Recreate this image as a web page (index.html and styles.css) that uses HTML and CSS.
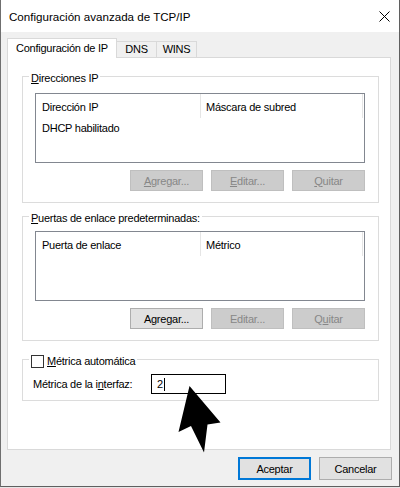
FILE: index.html
```html
<!DOCTYPE html>
<html lang="es">
<head>
<meta charset="utf-8">
<title>Configuración avanzada de TCP/IP</title>
<link rel="stylesheet" href="styles.css">
</head>
<body>
<div class="window">
  <div class="titlebar">
    <span class="title">Configuración avanzada de TCP/IP</span>
    <svg class="close" width="11" height="11" viewBox="0 0 11 11"><path d="M0.5 0.5 L10.5 10.5 M10.5 0.5 L0.5 10.5" stroke="#000" stroke-width="1" fill="none"/></svg>
  </div>
  <div class="client">
    <div class="tabs">
      <div class="tab active">Configuración de IP</div>
      <div class="tab">DNS</div>
      <div class="tab">WINS</div>
    </div>
    <div class="panel">
      <fieldset class="group g1">
        <legend><u>D</u>irecciones IP</legend>
        <div class="listview">
          <div class="lv-head">
            <div class="col c1">Dirección IP</div>
            <div class="col c2">Máscara de subred</div>
            <div class="col c3"></div>
          </div>
          <div class="lv-row">DHCP habilitado</div>
        </div>
        <div class="btnrow">
          <button class="btn" disabled><u>A</u>gregar...</button>
          <button class="btn" disabled><u>E</u>ditar...</button>
          <button class="btn" disabled><u>Q</u>uitar</button>
        </div>
      </fieldset>
      <fieldset class="group g2">
        <legend><u>P</u>uertas de enlace predeterminadas:</legend>
        <div class="listview">
          <div class="lv-head">
            <div class="col c1">Puerta de enlace</div>
            <div class="col c2">Métrico</div>
            <div class="col c3"></div>
          </div>
        </div>
        <div class="btnrow">
          <button class="btn">A<u>g</u>regar...</button>
          <button class="btn" disabled>Editar...</button>
          <button class="btn" disabled>Q<u>u</u>itar</button>
        </div>
      </fieldset>
      <fieldset class="group g3">
        <legend><span class="check"></span><span class="check-label"><u>M</u>étrica automática</span></legend>
        <div class="metric-row">
          <span class="metric-label">Métrica de la i<u>n</u>terfaz:</span>
          <span class="input">2<span class="caret"></span></span>
        </div>
      </fieldset>
    </div>
    <div class="footer">
      <button class="btn big default">Aceptar</button>
      <button class="btn big">Cancelar</button>
    </div>
  </div>
  <svg class="cursor" width="400" height="487" viewBox="0 0 400 487"><polygon points="189.5,386 220.5,422.5 207.5,424.5 204,452.5 191,426 178.5,432" fill="#000"/></svg>
</div>
</body>
</html>
```
FILE: styles.css
```css
* { box-sizing: border-box; }
html, body { margin: 0; padding: 0; }
body {
  width: 400px;
  height: 488px;
  background: #e6e6e6;
  font-family: "Liberation Sans", Arial, sans-serif;
  font-size: 11px;
  letter-spacing: -0.25px;
  color: #000;
}
u { text-decoration: underline; text-underline-offset: 1px; }

.window {
  position: relative;
  width: 400px;
  height: 487px;
  background: #f0f0f0;
  border-left: 1px solid #6f6f6f;
  border-right: 1px solid #5f5f5f;
  border-bottom: 1px solid #5f5f5f;
  display: flex;
  flex-direction: column;
}

.titlebar {
  height: 32px;
  background: #fff;
  display: flex;
  align-items: center;
  justify-content: space-between;
  padding: 0 9px 0 8px;
  flex: none;
}
.title {
  font-size: 11.6px;
  letter-spacing: 0;
  padding-top: 1px;
}
.close { display: block; }

.client {
  flex: 1;
  padding: 6px 8px 0 6px;
  display: flex;
  flex-direction: column;
}

.tabs {
  display: flex;
  align-items: flex-end;
  height: 19px;
}
.tab {
  width: 40px;
  height: 16px;
  line-height: 15px;
  text-align: center;
  border: 1px solid #d9d9d9;
  border-left: none;
  border-bottom: none;
  background: #f0f0f0;
}
.tab.active {
  width: 110px;
  height: 20px;
  margin-bottom: -1px;
  padding-top: 2px;
  border-left: 1px solid #d9d9d9;
  background: #fff;
  position: relative;
  z-index: 1;
}

.panel {
  height: 393px;
  background: #fff;
  border: 1px solid #d9d9d9;
  padding: 0 11px 0 14px;
  display: flex;
  flex-direction: column;
}

.group {
  margin: 0;
  border: 1px solid #dcdcdc;
  min-width: 0;
}
.group legend {
  padding: 5px 2px 0 2px;
  line-height: 13px;
  margin-left: -6px;
}
.g1 { margin-top: 9px; padding: 8px 13px 11px 12px; }
.g2 { margin-top: 4px; padding: 6px 13px 11px 12px; }
.g3 { margin-top: 9px; padding: 6px 10px 6px 10px; }
.g3 legend { margin-left: -4px; }

.listview {
  height: 70px;
  border: 1px solid #828790;
  background: #fff;
}
.lv-head {
  display: flex;
  height: 24px;
}
.lv-head .col {
  height: 24px;
  padding: 2px 0 0 6px;
  line-height: 22px;
  white-space: nowrap;
}
.lv-head .c1 { width: 165px; border-right: 1px solid #e5e5e5; }
.lv-head .c2 { width: 162px; padding-left: 5px; border-right: 1px solid #e5e5e5; }
.lv-head .c3 { flex: 1; padding: 0; }
.lv-row {
  padding: 1px 0 0 6px;
  line-height: 18px;
}

.btnrow {
  display: flex;
  justify-content: flex-end;
  gap: 8px;
  margin-top: 7px;
}
.btn {
  width: 73px;
  height: 21px;
  padding: 0;
  margin: 0;
  font: inherit;
  letter-spacing: inherit;
  color: #000;
  background: #e1e1e1;
  border: 1px solid #adadad;
  border-radius: 0;
}
.btn:disabled {
  background: #cccccc;
  border-color: #bfbfbf;
  color: #878787;
}
.btn.big { height: 23px; }
.btn.default { border: 2px solid #0078d7; }

.check {
  display: inline-block;
  width: 13px;
  height: 13px;
  border: 1px solid #333;
  background: #fff;
  vertical-align: -3px;
  margin-right: 3px;
}

.metric-row {
  display: flex;
  align-items: center;
}
.metric-label {
  width: 118px;
  flex: none;
}
.input {
  width: 75px;
  height: 20px;
  border: 1px solid #000;
  background: #fff;
  padding-left: 5px;
  line-height: 18px;
  display: flex;
  align-items: center;
}
.caret {
  display: inline-block;
  width: 1px;
  height: 13px;
  background: #000;
  margin-left: 1px;
}

.footer {
  display: flex;
  justify-content: flex-end;
  gap: 8px;
  padding-top: 7px;
  margin-right: -1px;
}

.cursor {
  position: absolute;
  left: -1px;
  top: 0;
  pointer-events: none;
}
```
